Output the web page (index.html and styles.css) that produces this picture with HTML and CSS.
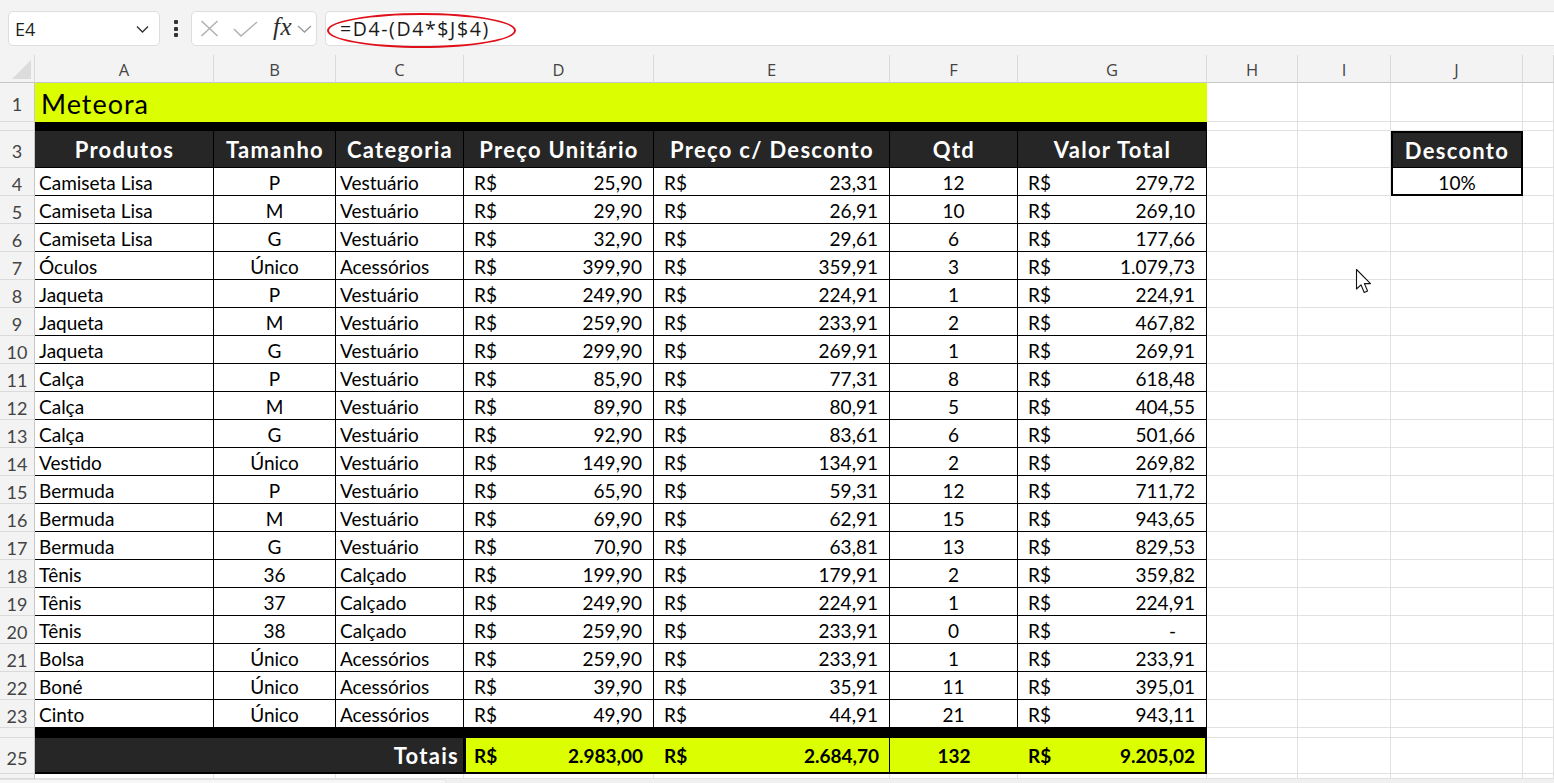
FILE: index.html
```html
<!DOCTYPE html>
<html lang="pt-BR">
<head>
<meta charset="utf-8">
<title>Meteora</title>
<link rel="stylesheet" href="styles.css">
</head>
<body>
<div class="top">
  <div class="namebox"><span>E4</span>
    <svg class="chev" width="13" height="8" viewBox="0 0 13 8"><path d="M1 1.5 L6.5 7 L12 1.5" fill="none" stroke="#333" stroke-width="1.4"/></svg>
  </div>
  <div class="kebab"><i></i><i></i><i></i></div>
  <div class="fxbox">
    <svg width="19" height="17" viewBox="0 0 19 17"><path d="M1.5 1 L17.5 16 M17.5 1 L1.5 16" stroke="#b0b0b0" stroke-width="1.5" fill="none"/></svg>
    <svg width="25" height="16" viewBox="0 0 25 16"><path d="M1 8 L8 15 L24 1" stroke="#b0b0b0" stroke-width="1.5" fill="none"/></svg>
    <span class="fx">fx</span>
    <svg width="15" height="8" viewBox="0 0 15 8"><path d="M1 1 L7.5 7 L14 1" fill="none" stroke="#9a9a9a" stroke-width="1.3"/></svg>
  </div>
  <div class="formula"><span>=D4-(D4*$J$4)</span></div>
  <div class="ring"></div>
</div>

<div class="sheet">
  <div class="row rh">
    <div class="corner"><svg width="21" height="21" viewBox="0 0 21 21"><path d="M20 1 L20 20 L1 20 Z" fill="#dcdcdc"/></svg></div>
    <div class="col">A</div><div class="col">B</div><div class="col">C</div><div class="col">D</div><div class="col">E</div><div class="col">F</div><div class="col">G</div><div class="col">H</div><div class="col">I</div><div class="col">J</div><div class="col"></div>
  </div>

  <div class="row r1">
    <div class="h">1</div><div class="c title">Meteora</div><div class="c"></div><div class="c"></div><div class="c"></div><div class="c"></div>
  </div>
  <div class="row r2">
    <div class="h"></div><div class="c bar"></div><div class="c"></div><div class="c"></div><div class="c"></div><div class="c"></div>
  </div>
  <div class="row r3">
    <div class="h">3</div>
    <div class="c th">Produtos</div><div class="c th">Tamanho</div><div class="c th">Categoria</div><div class="c th">Preço Unitário</div><div class="c th">Preço c/ Desconto</div><div class="c th">Qtd</div><div class="c th">Valor Total</div>
    <div class="c"></div><div class="c"></div><div class="c jh">Desconto</div><div class="c"></div>
  </div>

  <div class="row rd"><div class="h">4</div><div class="c t">Camiseta Lisa</div><div class="c t ctr">P</div><div class="c t">Vestuário</div><div class="c t acc"><span>R$</span><span>25,90</span></div><div class="c t acc"><span>R$</span><span>23,31</span></div><div class="c t ctr">12</div><div class="c t acc"><span>R$</span><span>279,72</span></div><div class="c"></div><div class="c"></div><div class="c jv">10%</div><div class="c"></div></div>
  <div class="row rd"><div class="h">5</div><div class="c t">Camiseta Lisa</div><div class="c t ctr">M</div><div class="c t">Vestuário</div><div class="c t acc"><span>R$</span><span>29,90</span></div><div class="c t acc"><span>R$</span><span>26,91</span></div><div class="c t ctr">10</div><div class="c t acc"><span>R$</span><span>269,10</span></div><div class="c"></div><div class="c"></div><div class="c"></div><div class="c"></div></div>
  <div class="row rd"><div class="h">6</div><div class="c t">Camiseta Lisa</div><div class="c t ctr">G</div><div class="c t">Vestuário</div><div class="c t acc"><span>R$</span><span>32,90</span></div><div class="c t acc"><span>R$</span><span>29,61</span></div><div class="c t ctr">6</div><div class="c t acc"><span>R$</span><span>177,66</span></div><div class="c"></div><div class="c"></div><div class="c"></div><div class="c"></div></div>
  <div class="row rd"><div class="h">7</div><div class="c t">Óculos</div><div class="c t ctr">Único</div><div class="c t">Acessórios</div><div class="c t acc"><span>R$</span><span>399,90</span></div><div class="c t acc"><span>R$</span><span>359,91</span></div><div class="c t ctr">3</div><div class="c t acc"><span>R$</span><span>1.079,73</span></div><div class="c"></div><div class="c"></div><div class="c"></div><div class="c"></div></div>
  <div class="row rd"><div class="h">8</div><div class="c t">Jaqueta</div><div class="c t ctr">P</div><div class="c t">Vestuário</div><div class="c t acc"><span>R$</span><span>249,90</span></div><div class="c t acc"><span>R$</span><span>224,91</span></div><div class="c t ctr">1</div><div class="c t acc"><span>R$</span><span>224,91</span></div><div class="c"></div><div class="c"></div><div class="c"></div><div class="c"></div></div>
  <div class="row rd"><div class="h">9</div><div class="c t">Jaqueta</div><div class="c t ctr">M</div><div class="c t">Vestuário</div><div class="c t acc"><span>R$</span><span>259,90</span></div><div class="c t acc"><span>R$</span><span>233,91</span></div><div class="c t ctr">2</div><div class="c t acc"><span>R$</span><span>467,82</span></div><div class="c"></div><div class="c"></div><div class="c"></div><div class="c"></div></div>
  <div class="row rd"><div class="h">10</div><div class="c t">Jaqueta</div><div class="c t ctr">G</div><div class="c t">Vestuário</div><div class="c t acc"><span>R$</span><span>299,90</span></div><div class="c t acc"><span>R$</span><span>269,91</span></div><div class="c t ctr">1</div><div class="c t acc"><span>R$</span><span>269,91</span></div><div class="c"></div><div class="c"></div><div class="c"></div><div class="c"></div></div>
  <div class="row rd"><div class="h">11</div><div class="c t">Calça</div><div class="c t ctr">P</div><div class="c t">Vestuário</div><div class="c t acc"><span>R$</span><span>85,90</span></div><div class="c t acc"><span>R$</span><span>77,31</span></div><div class="c t ctr">8</div><div class="c t acc"><span>R$</span><span>618,48</span></div><div class="c"></div><div class="c"></div><div class="c"></div><div class="c"></div></div>
  <div class="row rd"><div class="h">12</div><div class="c t">Calça</div><div class="c t ctr">M</div><div class="c t">Vestuário</div><div class="c t acc"><span>R$</span><span>89,90</span></div><div class="c t acc"><span>R$</span><span>80,91</span></div><div class="c t ctr">5</div><div class="c t acc"><span>R$</span><span>404,55</span></div><div class="c"></div><div class="c"></div><div class="c"></div><div class="c"></div></div>
  <div class="row rd"><div class="h">13</div><div class="c t">Calça</div><div class="c t ctr">G</div><div class="c t">Vestuário</div><div class="c t acc"><span>R$</span><span>92,90</span></div><div class="c t acc"><span>R$</span><span>83,61</span></div><div class="c t ctr">6</div><div class="c t acc"><span>R$</span><span>501,66</span></div><div class="c"></div><div class="c"></div><div class="c"></div><div class="c"></div></div>
  <div class="row rd"><div class="h">14</div><div class="c t">Vestido</div><div class="c t ctr">Único</div><div class="c t">Vestuário</div><div class="c t acc"><span>R$</span><span>149,90</span></div><div class="c t acc"><span>R$</span><span>134,91</span></div><div class="c t ctr">2</div><div class="c t acc"><span>R$</span><span>269,82</span></div><div class="c"></div><div class="c"></div><div class="c"></div><div class="c"></div></div>
  <div class="row rd"><div class="h">15</div><div class="c t">Bermuda</div><div class="c t ctr">P</div><div class="c t">Vestuário</div><div class="c t acc"><span>R$</span><span>65,90</span></div><div class="c t acc"><span>R$</span><span>59,31</span></div><div class="c t ctr">12</div><div class="c t acc"><span>R$</span><span>711,72</span></div><div class="c"></div><div class="c"></div><div class="c"></div><div class="c"></div></div>
  <div class="row rd"><div class="h">16</div><div class="c t">Bermuda</div><div class="c t ctr">M</div><div class="c t">Vestuário</div><div class="c t acc"><span>R$</span><span>69,90</span></div><div class="c t acc"><span>R$</span><span>62,91</span></div><div class="c t ctr">15</div><div class="c t acc"><span>R$</span><span>943,65</span></div><div class="c"></div><div class="c"></div><div class="c"></div><div class="c"></div></div>
  <div class="row rd"><div class="h">17</div><div class="c t">Bermuda</div><div class="c t ctr">G</div><div class="c t">Vestuário</div><div class="c t acc"><span>R$</span><span>70,90</span></div><div class="c t acc"><span>R$</span><span>63,81</span></div><div class="c t ctr">13</div><div class="c t acc"><span>R$</span><span>829,53</span></div><div class="c"></div><div class="c"></div><div class="c"></div><div class="c"></div></div>
  <div class="row rd"><div class="h">18</div><div class="c t">Tênis</div><div class="c t ctr">36</div><div class="c t">Calçado</div><div class="c t acc"><span>R$</span><span>199,90</span></div><div class="c t acc"><span>R$</span><span>179,91</span></div><div class="c t ctr">2</div><div class="c t acc"><span>R$</span><span>359,82</span></div><div class="c"></div><div class="c"></div><div class="c"></div><div class="c"></div></div>
  <div class="row rd"><div class="h">19</div><div class="c t">Tênis</div><div class="c t ctr">37</div><div class="c t">Calçado</div><div class="c t acc"><span>R$</span><span>249,90</span></div><div class="c t acc"><span>R$</span><span>224,91</span></div><div class="c t ctr">1</div><div class="c t acc"><span>R$</span><span>224,91</span></div><div class="c"></div><div class="c"></div><div class="c"></div><div class="c"></div></div>
  <div class="row rd"><div class="h">20</div><div class="c t">Tênis</div><div class="c t ctr">38</div><div class="c t">Calçado</div><div class="c t acc"><span>R$</span><span>259,90</span></div><div class="c t acc"><span>R$</span><span>233,91</span></div><div class="c t ctr">0</div><div class="c t acc dash"><span>R$</span><span>-</span></div><div class="c"></div><div class="c"></div><div class="c"></div><div class="c"></div></div>
  <div class="row rd"><div class="h">21</div><div class="c t">Bolsa</div><div class="c t ctr">Único</div><div class="c t">Acessórios</div><div class="c t acc"><span>R$</span><span>259,90</span></div><div class="c t acc"><span>R$</span><span>233,91</span></div><div class="c t ctr">1</div><div class="c t acc"><span>R$</span><span>233,91</span></div><div class="c"></div><div class="c"></div><div class="c"></div><div class="c"></div></div>
  <div class="row rd"><div class="h">22</div><div class="c t">Boné</div><div class="c t ctr">Único</div><div class="c t">Acessórios</div><div class="c t acc"><span>R$</span><span>39,90</span></div><div class="c t acc"><span>R$</span><span>35,91</span></div><div class="c t ctr">11</div><div class="c t acc"><span>R$</span><span>395,01</span></div><div class="c"></div><div class="c"></div><div class="c"></div><div class="c"></div></div>
  <div class="row rd"><div class="h">23</div><div class="c t">Cinto</div><div class="c t ctr">Único</div><div class="c t">Acessórios</div><div class="c t acc"><span>R$</span><span>49,90</span></div><div class="c t acc"><span>R$</span><span>44,91</span></div><div class="c t ctr">21</div><div class="c t acc"><span>R$</span><span>943,11</span></div><div class="c"></div><div class="c"></div><div class="c"></div><div class="c"></div></div>

  <div class="row r24">
    <div class="h"></div><div class="c bar"></div><div class="c"></div><div class="c"></div><div class="c"></div><div class="c"></div>
  </div>
  <div class="row r25">
    <div class="h">25</div>
    <div class="c tot-label">Totais</div>
    <div class="c tot tot-d acc"><span>R$</span><span>2.983,00</span></div>
    <div class="c tot tot-e acc"><span>R$</span><span>2.684,70</span></div>
    <div class="c tot tot-f ctr">132</div>
    <div class="c tot tot-g acc"><span>R$</span><span>9.205,02</span></div>
    <div class="c"></div><div class="c"></div><div class="c"></div><div class="c"></div>
  </div>
  <div class="row r26">
    <div class="h"></div><div class="c"></div><div class="c"></div><div class="c"></div><div class="c"></div><div class="c"></div><div class="c"></div><div class="c"></div><div class="c"></div><div class="c"></div><div class="c"></div><div class="c"></div>
  </div>
</div>
<div class="bottom"><div class="tabs"></div></div>

<svg class="cursor" width="18" height="28" viewBox="0 0 18 28"><path d="M1.5 1.5 L1.5 21 L6 16.8 L9.2 24.5 L12.6 23 L9.4 15.6 L15.5 15.6 Z" fill="#fff" stroke="#111" stroke-width="1.1" stroke-linejoin="round"/></svg>
</body>
</html>
```
FILE: styles.css
```css
* { box-sizing: border-box; }
html, body { margin: 0; padding: 0; }
body {
  width: 1554px;
  height: 783px;
  overflow: hidden;
  background: #ffffff;
  font-family: Lato, "Noto Sans", sans-serif;
  color: #000;
  position: relative;
}

/* ---------- formula bar ---------- */
.top {
  height: 55px;
  background: #f3f3f3;
  display: flex;
  align-items: flex-start;
  padding: 11px 0 0 8px;
  position: relative;
}
.namebox {
  width: 152px;
  height: 35px;
  background: #fff;
  border: 1px solid #dedede;
  border-radius: 5px;
  display: flex;
  align-items: center;
  justify-content: space-between;
  padding: 0 10px 0 6px;
  font-family: "Open Sans", "Noto Sans", sans-serif;
  font-size: 18px;
  color: #1f1f1f;
}
.kebab {
  width: 31px;
  height: 35px;
  display: flex;
  flex-direction: column;
  align-items: center;
  justify-content: center;
  gap: 2.5px;
}
.kebab i {
  display: block;
  width: 4px;
  height: 4px;
  background: #333;
  border-radius: 1px;
}
.fxbox {
  width: 126px;
  height: 35px;
  background: #fff;
  border: 1px solid #dedede;
  border-radius: 5px;
  display: flex;
  align-items: center;
  padding: 0 0 0 8px;
}
.fxbox svg:nth-child(2) { margin-left: 14px; }
.fx {
  font-family: "Liberation Serif", "DejaVu Serif", serif;
  font-style: italic;
  font-size: 25px;
  color: #2b2b2b;
  margin-left: 15px;
  margin-top: -4px;
  letter-spacing: 0.5px;
}
.fxbox svg:last-child { margin-left: 5px; }
.formula {
  flex: 1;
  height: 35px;
  margin-left: 8px;
  background: #fff;
  border: 1px solid #dedede;
  border-right: none;
  border-radius: 5px 0 0 5px;
  display: flex;
  align-items: center;
  padding-left: 14px;
  font-family: "Open Sans", "Noto Sans", sans-serif;
  font-size: 19.5px;
  letter-spacing: 1.6px;
  color: #1a1a1a;
}
.ring {
  position: absolute;
  left: 327px;
  top: 13px;
  width: 189px;
  height: 35px;
  border: 2.8px solid #e0101a;
  border-radius: 50%;
}

/* ---------- sheet grid ---------- */
.row {
  display: grid;
  grid-template-columns: 35px 179px 122px 128px 190px 236px 128px 189px 91px 93px 132px 31px;
}
.rh { height: 28px; background: #f3f3f3; }
.r1 { height: 39px; grid-template-columns: 35px 1172px 91px 93px 132px 31px; }
.r2 { height: 9px; grid-template-columns: 35px 1172px 91px 93px 132px 31px; }
.r3 { height: 37px; }
.rd { height: 28px; }
.r24 { height: 10px; grid-template-columns: 35px 1172px 91px 93px 132px 31px; }
.r25 { height: 36px; grid-template-columns: 35px 429px 190px 236px 128px 189px 91px 93px 132px 31px; }
.r26 { height: 5px; }

.corner {
  border-bottom: 1px solid #c6c6c6;
  border-right: 1px solid #dadada;
  display: flex;
  align-items: flex-end;
  justify-content: flex-end;
  padding: 0 2px 2px 0;
}
.col {
  border-bottom: 1px solid #c6c6c6;
  border-right: 1px solid #dadada;
  display: flex;
  align-items: center;
  justify-content: center;
  font-family: "Open Sans", "Noto Sans", sans-serif;
  font-size: 16.5px;
  color: #444;
  padding-top: 1px;
}
.h {
  background: #f3f3f3;
  border-bottom: 1px solid #dadada;
  border-right: 1px solid #c6c6c6;
  display: flex;
  align-items: center;
  justify-content: center;
  font-family: Lato, "Noto Sans", sans-serif;
  font-size: 18px;
  color: #444;
  padding-top: 4px;
}
.c {
  border-right: 1px solid #e1e1e1;
  border-bottom: 1px solid #e1e1e1;
  display: flex;
  align-items: center;
  font-size: 19px;
  padding: 2px 4px 0 4px;
  white-space: nowrap;
  overflow: hidden;
}
.title {
  background: #dbff00;
  border-color: #dbff00;
  font-size: 27px;
  letter-spacing: 1px;
  padding: 3px 0 0 6px;
}
.bar { background: #000; border-color: #000; }
.th {
  background: #262626;
  color: #fff;
  font-weight: 700;
  font-size: 22px;
  letter-spacing: 1.3px;
  justify-content: center;
  border-color: #000;
  padding: 0 0 0 1px;
}
.t { border-right-color: #000; border-bottom-color: #000; }
.ctr { justify-content: center; }
.acc { justify-content: space-between; padding: 2px 11px 0 10px; }
.dash { padding-right: 30px; }

.jh {
  background: #262626;
  color: #fff;
  font-weight: 700;
  font-size: 22px;
  letter-spacing: 1.3px;
  justify-content: center;
  border: 2px solid #000;
  border-bottom: 1px solid #000;
  padding: 0;
}
.jv {
  justify-content: center;
  border: 2px solid #000;
  border-top: none;
}

.tot-label {
  background: #262626;
  border-color: #000;
  border-bottom: 2px solid #000;
  color: #fff;
  font-weight: 700;
  font-size: 22px;
  letter-spacing: 1.3px;
  justify-content: flex-end;
  padding: 0 4px 0 0;
}
.tot {
  background: #dbff00;
  font-weight: 700;
  border-right: none;
  border-bottom: 2px solid #000;
  padding-top: 1px;
}
.tot-d { border-left: 2px solid #000; padding-left: 8px; }
.tot-e { border-right: 1px solid #000; padding-right: 10px; }
.tot-g { border-right: 2px solid #000; padding-right: 10px; }

/* ---------- bottom ---------- */
.bottom {
  height: 5px;
  background: #f0f0f0;
}
.tabs {
  width: 447px;
  height: 5px;
  background: #f7f7f7;
  border-top: 1px solid #e3e3e3;
  border-right: 1px solid #e3e3e3;
  border-radius: 0 6px 0 0;
}
.cursor {
  position: absolute;
  left: 1355px;
  top: 268px;
}
```
